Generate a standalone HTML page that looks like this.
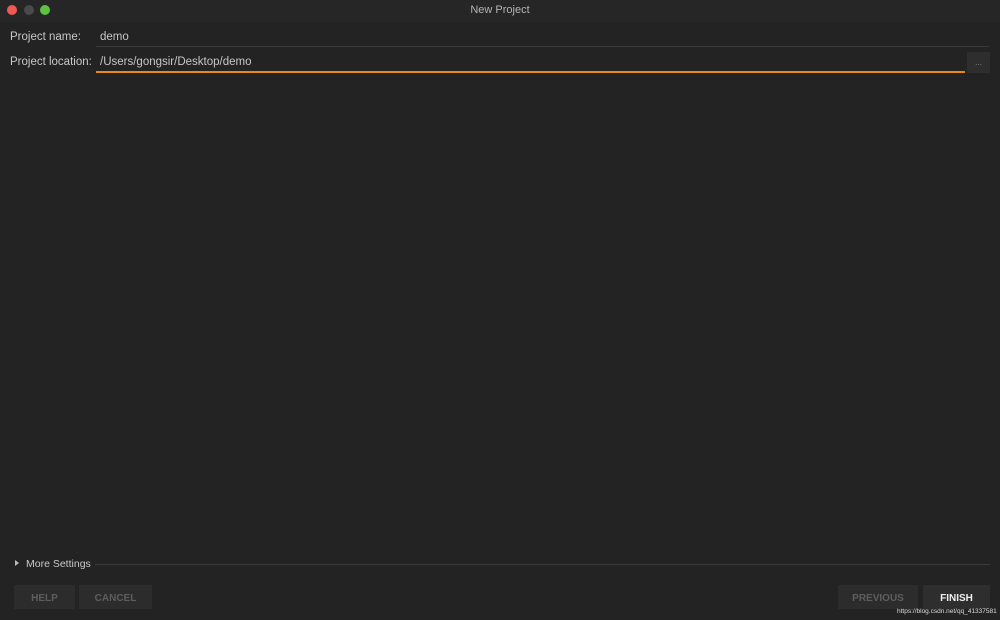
<!DOCTYPE html>
<html><head><style>
body{margin:0;width:1000px;height:620px;background:#232323;font-family:"Liberation Sans",sans-serif;position:relative;overflow:hidden}
.a{position:absolute}
.t{color:#c8c8c8;font-size:11.5px}
.btn{position:absolute;background:#2c2c2c;color:#5e5e5e;font-size:10px;font-weight:bold;text-align:center;line-height:27px;height:24px}
</style></head><body>
<div class="a" style="left:0;top:0;width:1000px;height:22px;background:#262626"></div>
<div class="a" style="left:7px;top:5px;width:10px;height:10px;border-radius:50%;background:#ee5a52"></div>
<div class="a" style="left:24px;top:5px;width:10px;height:10px;border-radius:50%;background:#4a4a4a"></div>
<div class="a" style="left:40px;top:5px;width:10px;height:10px;border-radius:50%;background:#5fc140"></div>
<div class="a" style="left:0;top:4px;width:1000px;text-align:center;color:#b4b4b4;font-size:11px">New Project</div>
<div class="a t" style="left:10px;top:31px">Project name:</div>
<div class="a t" style="left:100px;top:31px">demo</div>
<div class="a" style="left:96px;top:46px;width:893px;height:1px;background:#3a3a3a"></div>
<div class="a t" style="left:10px;top:56px">Project location:</div>
<div class="a t" style="left:100px;top:56px">/Users/gongsir/Desktop/demo</div>
<div class="a" style="left:96px;top:71px;width:869px;height:2px;background:#e88a0c"></div>
<div class="a" style="left:967px;top:52px;width:23px;height:21px;background:#2e2e2e;color:#888;font-size:8px;text-align:center;line-height:21px">...</div>
<div class="a" style="left:15px;top:560px;width:0;height:0;border-top:3px solid transparent;border-bottom:3px solid transparent;border-left:4px solid #bbb"></div>
<div class="a t" style="left:26px;top:558px;font-size:10.5px">More Settings</div>
<div class="a" style="left:95px;top:564px;width:895px;height:1px;background:#3a3a3a"></div>
<div class="btn" style="left:14px;top:585px;width:61px">HELP</div>
<div class="btn" style="left:79px;top:585px;width:73px">CANCEL</div>
<div class="btn" style="left:838px;top:585px;width:80px">PREVIOUS</div>
<div class="btn" style="left:923px;top:585px;width:67px;background:#2e2e2e;color:#eee">FINISH</div>
<div class="a" style="left:897px;top:608px;color:#ddd;font-size:6.5px">https://blog.csdn.net/qq_41337581</div>
</body></html>
